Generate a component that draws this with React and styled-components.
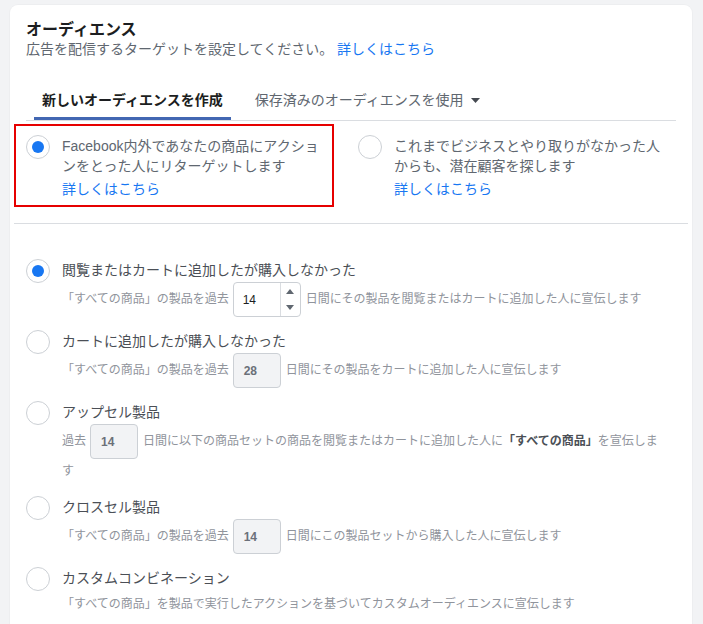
import React from 'react';
import styled, { createGlobalStyle } from 'styled-components';

const GlobalStyle = createGlobalStyle`
  body {
    margin: 0;
    background: #f2f3f5;
    font-family: "Liberation Sans", "Noto Sans CJK JP", sans-serif;
    color: #1c1e21;
  }
`;

const rows = [
  {
    title: '閲覧またはカートに追加したが購入しなかった',
    checked: true,
    before: '「すべての商品」の製品を過去',
    value: 14,
    spinner: true,
    after: '日間にその製品を閲覧またはカートに追加した人に宣伝します',
  },
  {
    title: 'カートに追加したが購入しなかった',
    before: '「すべての商品」の製品を過去',
    value: 28,
    after: '日間にその製品をカートに追加した人に宣伝します',
  },
  {
    title: 'アップセル製品',
    before: '過去',
    value: 14,
    after: '日間に以下の商品セットの商品を閲覧またはカートに追加した人に',
    bold: '「すべての商品」',
    tail: 'を宣伝します',
  },
  {
    title: 'クロスセル製品',
    before: '「すべての商品」の製品を過去',
    value: 14,
    after: '日間にこの製品セットから購入した人に宣伝します',
  },
  {
    title: 'カスタムコンビネーション',
    before: '「すべての商品」を製品で実行したアクションを基づいてカスタムオーディエンスに宣伝します',
  },
];

const Caret = ({ up }) => (
  <svg width="8" height="5" viewBox="0 0 8 5">
    <path d={up ? 'M0 5 L4 0 L8 5 Z' : 'M0 0 L8 0 L4 5 Z'} fill="#606770" />
  </svg>
);

const App = () => {
  return (
    <>
      <GlobalStyle />
      <Page>
        <Card>
          <Title>オーディエンス</Title>
          <Subtitle>
            広告を配信するターゲットを設定してください。 <Link>詳しくはこちら</Link>
          </Subtitle>

          <Tabs>
            <Tab $active>新しいオーディエンスを作成</Tab>
            <Tab>
              保存済みのオーディエンスを使用
              <TabCaret>
                <svg width="9" height="5" viewBox="0 0 9 5">
                  <path d="M0 0 L9 0 L4.5 5 Z" fill="#444950" />
                </svg>
              </TabCaret>
            </Tab>
          </Tabs>

          <OptionGrid>
            <OptionBox $highlight>
              <Radio $checked />
              <OptionText>
                Facebook内外であなたの商品にアクションをとった人にリターゲットします
                <OptionLink>詳しくはこちら</OptionLink>
              </OptionText>
            </OptionBox>
            <OptionBox>
              <Radio />
              <OptionText>
                これまでビジネスとやり取りがなかった人からも、潜在顧客を探します
                <OptionLink>詳しくはこちら</OptionLink>
              </OptionText>
            </OptionBox>
          </OptionGrid>

          <Divider />

          <List>
            {rows.map((row) => (
              <Row key={row.title}>
                <Radio $checked={row.checked} />
                <RowBody>
                  <RowTitle>{row.title}</RowTitle>
                  <RowSub $plain={row.value === undefined}>
                    {row.before}
                    {row.value !== undefined &&
                      (row.spinner ? (
                        <SpinBox>
                          <SpinValue>{row.value}</SpinValue>
                          <SpinButtons>
                            <SpinButton>
                              <Caret up />
                            </SpinButton>
                            <SpinButton>
                              <Caret />
                            </SpinButton>
                          </SpinButtons>
                        </SpinBox>
                      ) : (
                        <NumberBox>{row.value}</NumberBox>
                      ))}
                    {row.after}
                    {row.bold && <Strong>{row.bold}</Strong>}
                    {row.tail}
                  </RowSub>
                </RowBody>
              </Row>
            ))}
          </List>
        </Card>
      </Page>
    </>
  );
};

const Page = styled.div`
  padding: 5px 11px 0 10px;
`;

const Card = styled.section`
  background: #fff;
  border-radius: 8px;
  padding: 15px 16px 24px;
  box-shadow: 0 0 0 1px rgba(0, 0, 0, 0.02);
`;

const Title = styled.h2`
  margin: 0;
  font-size: 16px;
  line-height: 20px;
  font-weight: bold;
  color: #1c1e21;
`;

const Subtitle = styled.div`
  font-size: 14px;
  line-height: 18px;
  color: #606770;
`;

const Link = styled.a`
  color: #1877f2;
  cursor: pointer;
`;

const Tabs = styled.div`
  display: flex;
  gap: 16px;
  margin-top: 22px;
  padding-left: 8px;
  border-bottom: 1px solid #dadde1;
`;

const Tab = styled.div`
  display: flex;
  align-items: center;
  padding: 10px 8px 7px;
  font-size: 14px;
  line-height: 20px;
  font-weight: ${(p) => (p.$active ? 'bold' : 'normal')};
  color: ${(p) => (p.$active ? '#1c1e21' : '#606770')};
  border-bottom: 3px solid ${(p) => (p.$active ? '#4267b2' : 'transparent')};
  cursor: pointer;
`;

const TabCaret = styled.span`
  display: inline-flex;
  margin-left: 7px;
`;

const OptionGrid = styled.div`
  display: grid;
  grid-template-columns: 320px 320px;
  column-gap: 12px;
  margin: 3px -12px 0;
`;

const OptionBox = styled.label`
  display: flex;
  align-items: flex-start;
  gap: 12px;
  padding: 10px 2px 6px 10px;
  border: 2px solid ${(p) => (p.$highlight ? '#e60000' : 'transparent')};
  cursor: pointer;
`;

const Radio = styled.span`
  flex: none;
  position: relative;
  width: 24px;
  height: 24px;
  margin-top: -1px;
  box-sizing: border-box;
  border: 1px solid #ccd0d5;
  border-radius: 50%;
  background: #fff;

  &::after {
    content: '';
    display: ${(p) => (p.$checked ? 'block' : 'none')};
    position: absolute;
    top: 5px;
    left: 5px;
    width: 12px;
    height: 12px;
    border-radius: 50%;
    background: #1877f2;
  }
`;

const OptionText = styled.div`
  font-size: 14px;
  line-height: 20px;
  color: #606770;
`;

const OptionLink = styled(Link)`
  display: block;
  margin-top: 3px;
`;

const Divider = styled.hr`
  margin: 16px -12px 0;
  border: none;
  border-top: 1px solid #dadde1;
`;

const List = styled.div`
  padding-top: 36px;
`;

const Row = styled.div`
  display: flex;
  align-items: flex-start;
  gap: 12px;
  margin-bottom: 14px;
`;

const RowBody = styled.div`
  max-width: 600px;
`;

const RowTitle = styled.div`
  font-size: 14px;
  line-height: 20px;
  color: #4b4f56;
`;

const RowSub = styled.div`
  margin-top: ${(p) => (p.$plain ? '4px' : '2px')};
  font-size: 12px;
  line-height: 24px;
  color: #90949c;
`;

const Strong = styled.b`
  color: #4b4f56;
`;

const NumberBox = styled.span`
  display: inline-flex;
  align-items: center;
  vertical-align: middle;
  box-sizing: border-box;
  width: 48px;
  height: 35px;
  margin: 0 5px 0 4px;
  padding-left: 10px;
  border: 1px solid #ccd0d5;
  border-radius: 4px;
  background: #f2f3f5;
  font-size: 12px;
  font-weight: bold;
  color: #6b7079;
`;

const SpinBox = styled.span`
  display: inline-flex;
  vertical-align: middle;
  box-sizing: border-box;
  width: 68px;
  height: 35px;
  margin: 0 5px 0 4px;
  border: 1px solid #ccd0d5;
  border-radius: 4px;
  background: #fff;
`;

const SpinValue = styled.span`
  flex: 1;
  display: flex;
  align-items: center;
  padding-left: 9px;
  font-size: 12px;
  color: #1c1e21;
`;

const SpinButtons = styled.span`
  width: 19px;
  display: flex;
  flex-direction: column;
  border-left: 1px solid #dadde1;
`;

const SpinButton = styled.span`
  flex: 1;
  display: flex;
  align-items: center;
  justify-content: center;
`;

export default App;
